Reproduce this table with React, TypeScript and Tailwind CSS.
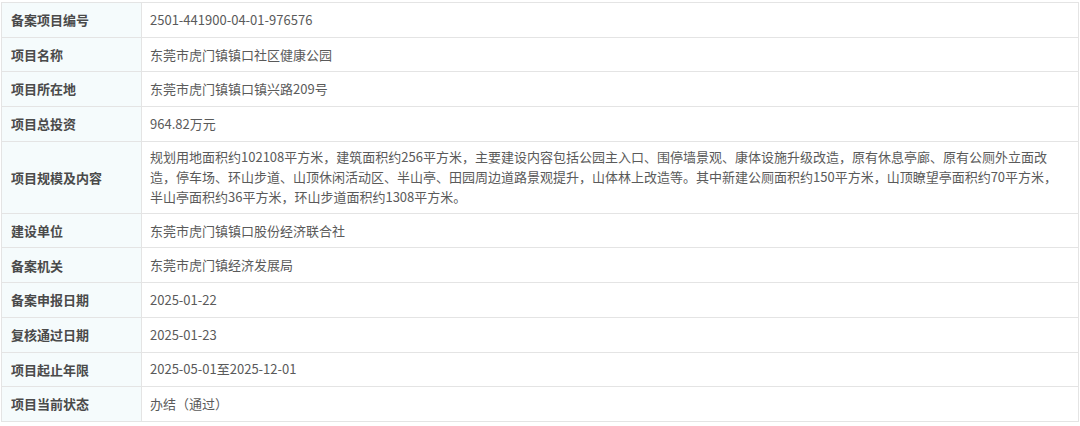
import React from "react";

const rows: [string, string][] = [
  ["备案项目编号", "2501-441900-04-01-976576"],
  ["项目名称", "东莞市虎门镇镇口社区健康公园"],
  ["项目所在地", "东莞市虎门镇镇口镇兴路209号"],
  ["项目总投资", "964.82万元"],
  [
    "项目规模及内容",
    "规划用地面积约102108平方米，建筑面积约256平方米，主要建设内容包括公园主入口、围停墙景观、康体设施升级改造，原有休息亭廊、原有公厕外立面改造，停车场、环山步道、山顶休闲活动区、半山亭、田园周边道路景观提升，山体林上改造等。其中新建公厕面积约150平方米，山顶瞭望亭面积约70平方米，半山亭面积约36平方米，环山步道面积约1308平方米。",
  ],
  ["建设单位", "东莞市虎门镇镇口股份经济联合社"],
  ["备案机关", "东莞市虎门镇经济发展局"],
  ["备案申报日期", "2025-01-22"],
  ["复核通过日期", "2025-01-23"],
  ["项目起止年限", "2025-05-01至2025-12-01"],
  ["项目当前状态", "办结（通过）"],
];

export default function App() {
  return (
    <div
      className="w-[1080px] h-[426px] bg-white pt-[2px] pl-[1px]"
      style={{ fontFamily: '"Noto Sans CJK SC", "Noto Sans", sans-serif' }}
    >
      <table className="w-[1078px] border-collapse text-[13px]">
        <tbody>
          {rows.map(([k, v]) => (
            <tr key={k} className={k === "项目规模及内容" ? "h-[72px]" : "h-[34.7px]"}>
              <td className="w-[140px] border border-[#e4e4e4] bg-[#f5fbfc] pl-[9px] font-bold text-[#4a4a4a] align-middle">
                {k}
              </td>
              <td className="border border-[#e4e4e4] px-[8px] text-[#5a5a5a] leading-[20px] align-middle">
                {v}
              </td>
            </tr>
          ))}
        </tbody>
      </table>
    </div>
  );
}
